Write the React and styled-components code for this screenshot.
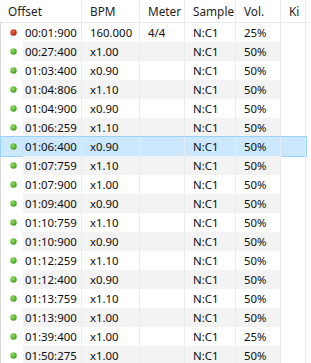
import React from "react";
import styled, { createGlobalStyle, css } from "styled-components";

const Global = createGlobalStyle`
  html, body { margin: 0; padding: 0; background: #fff; }
  body { font-family: "Noto Sans", "Open Sans", sans-serif; font-size: 11.4px; color: #111; }
`;

const Table = styled.div`
  width: 311px;
  height: 363px;
  overflow: hidden;
  background: #fff;
`;

const HeaderRow = styled.div`
  display: grid;
  grid-template-columns: 82px 58px 45px 51px 45px 25px 5px;
  height: 22px;
  border-bottom: 1px solid #e3e9f1;
`;

const HeaderCell = styled.div`
  display: flex;
  align-items: center;
  padding-left: 8px;
  color: #1e1e1e;
  font-size: 11.8px;
  border-right: ${(p) => (p.$last ? "none" : "1px solid #e6ecf3")};
  overflow: hidden;
  white-space: nowrap;
`;

const Body = styled.div`
  display: flex;
  flex-direction: column;
  border-left: 1px solid #d6d6d6;
`;

const Row = styled.div`
  display: grid;
  grid-template-columns: 22px 59px 58px 45px 51px 45px 25px 5px;
  height: 19px;
  position: relative;
  isolation: isolate;
  ${(p) =>
    p.$selected &&
    css`
      &::after {
        content: "";
        position: absolute;
        left: -1px;
        top: -1px;
        width: 307px;
        height: 21px;
        box-sizing: border-box;
        background: #cce8ff;
        border: 1px solid #99d1ff;
        z-index: -1;
      }
    `}
`;

const IconCell = styled.div`
  display: flex;
  align-items: center;
  justify-content: center;
  padding-left: 2px;
`;

const Cell = styled.div`
  display: flex;
  align-items: center;
  padding-left: ${(p) => (p.$first ? "2px" : "8px")};
  background: ${(p) => (p.$shade ? "#f3f3f3" : "transparent")};
  border-right: ${(p) => (p.$line ? "1px solid #e6ecf3" : "none")};
  white-space: nowrap;
  overflow: hidden;
  color: #0c0c0c;
`;

const Dot = ({ red }) => (
  <svg width="7" height="7" viewBox="0 0 7 7">
    <defs>
      <radialGradient id={red ? "gr" : "gg"} cx="0.38" cy="0.35" r="0.7">
        <stop offset="0" stopColor={red ? "#f06a4a" : "#8fe05a"} />
        <stop offset="1" stopColor={red ? "#a6210f" : "#3e9a1a"} />
      </radialGradient>
    </defs>
    <circle cx="3.5" cy="3.5" r="3.2" fill={`url(#${red ? "gr" : "gg"})`} />
  </svg>
);

const rows = [
  ["00:01:900", "160.000", "4/4", "N:C1", "25%"],
  ["00:27:400", "x1.00", "", "N:C1", "50%"],
  ["01:03:400", "x0.90", "", "N:C1", "50%"],
  ["01:04:806", "x1.10", "", "N:C1", "50%"],
  ["01:04:900", "x0.90", "", "N:C1", "50%"],
  ["01:06:259", "x1.10", "", "N:C1", "50%"],
  ["01:06:400", "x0.90", "", "N:C1", "50%"],
  ["01:07:759", "x1.10", "", "N:C1", "50%"],
  ["01:07:900", "x1.00", "", "N:C1", "50%"],
  ["01:09:400", "x0.90", "", "N:C1", "50%"],
  ["01:10:759", "x1.10", "", "N:C1", "50%"],
  ["01:10:900", "x0.90", "", "N:C1", "50%"],
  ["01:12:259", "x1.10", "", "N:C1", "50%"],
  ["01:12:400", "x0.90", "", "N:C1", "50%"],
  ["01:13:759", "x1.10", "", "N:C1", "50%"],
  ["01:13:900", "x1.00", "", "N:C1", "50%"],
  ["01:39:400", "x1.00", "", "N:C1", "25%"],
  ["01:50:275", "x1.00", "", "N:C1", "50%"],
];

export default function App() {
  return (
    <>
      <Global />
      <Table>
        <HeaderRow>
          <HeaderCell>Offset</HeaderCell>
          <HeaderCell>BPM</HeaderCell>
          <HeaderCell>Meter</HeaderCell>
          <HeaderCell>Sample</HeaderCell>
          <HeaderCell>Vol.</HeaderCell>
          <HeaderCell>Ki</HeaderCell>
          <HeaderCell $last />
        </HeaderRow>
        <Body>
          {rows.map((r, i) => {
            const selected = i === 6;
            const shade = i % 2 === 1 && !selected;
            return (
              <Row key={i} $selected={selected}>
                <IconCell>
                  <Dot red={i === 0} />
                </IconCell>
                <Cell $first $shade={shade} $line>{r[0]}</Cell>
                <Cell $shade={shade} $line>{r[1]}</Cell>
                <Cell $shade={shade} $line>{r[2]}</Cell>
                <Cell $shade={shade} $line>{r[3]}</Cell>
                <Cell $shade={shade} $line>{r[4]}</Cell>
                <Cell $line />
                <Cell />
              </Row>
            );
          })}
        </Body>
      </Table>
    </>
  );
}
